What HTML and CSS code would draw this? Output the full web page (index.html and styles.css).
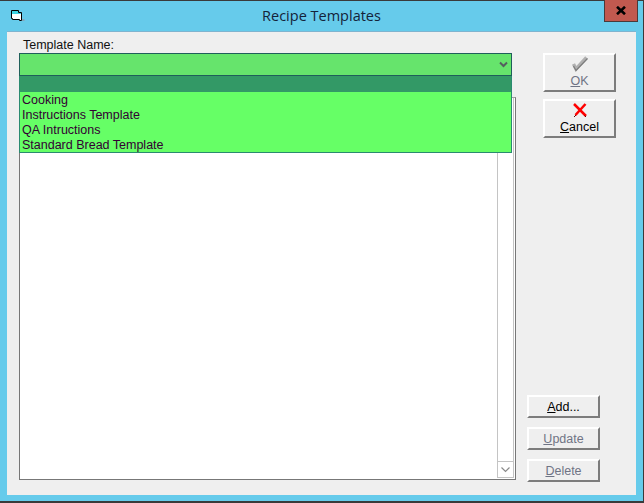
FILE: index.html
```html
<!DOCTYPE html>
<html lang="en">
<head>
<meta charset="utf-8">
<title>Recipe Templates</title>
<link rel="stylesheet" href="styles.css">
</head>
<body>
<div class="window">
  <header class="titlebar">
    <svg class="app-icon" width="14" height="12" viewBox="0 0 14 12">
      <path d="M0.5 0.5h7v2h3v8h-2v-1h-7v-1h-1z" fill="#fff" stroke="#000"/>
      <path d="M1 1h6v2h3v1H1z" fill="#3fd4e4"/>
      <path d="M11 10h2.500" stroke="#a08088" stroke-width="1"/>
    </svg>
    <h1 class="title">Recipe Templates</h1>
    <button class="close" type="button" aria-label="Close">
      <svg width="10" height="9" viewBox="0 0 10 9"><path d="M1 0.800 9 8.200M9 0.800 1 8.200" stroke="#000" stroke-width="2.600" fill="none"/></svg>
    </button>
  </header>
  <main class="client">
    <section class="editor">
      <label class="field-label">Template Name:</label>
      <div class="combo-wrap">
        <div class="combo">
          <svg class="chevron" width="9" height="7" viewBox="0 0 9 7"><path d="M1 1.500l3.500 3.500 3.500-3.500" fill="none" stroke="#555f5f" stroke-width="2"/></svg>
        </div>
        <div class="dropdown">
          <div class="dropdown-selected"></div>
          <ul class="dropdown-list">
            <li>Cooking</li>
            <li>Instructions Template</li>
            <li>QA Intructions</li>
            <li>Standard Bread Template</li>
          </ul>
        </div>
      </div>
      <div class="listbox">
        <div class="list-body"></div>
        <div class="scrollbar">
          <div class="scroll-track"></div>
          <div class="scroll-btn">
            <svg width="9" height="6" viewBox="0 0 9 6"><path d="M0.500 0.500l4 4 4-4" fill="none" stroke="#8a8a8a" stroke-width="1.200"/></svg>
          </div>
        </div>
      </div>
    </section>
    <aside class="actions">
      <div class="primary-actions">
        <button class="btn btn-tall is-disabled" type="button">
          <svg class="btn-icon" width="18" height="19" viewBox="0 0 18 19"><path d="M2.500 9 5 14 15.500 2.500" fill="none" stroke="#b0b0b0" stroke-width="3.400"/><path d="M2.500 11 5 15.500 16.500 3.500" fill="none" stroke="#7c7c7c" stroke-width="1.200"/></svg>
          <span><u>O</u>K</span>
        </button>
        <button class="btn btn-tall" type="button">
          <svg class="btn-icon" width="16" height="19" viewBox="0 0 16 19"><path d="M2 3l12 12M13.500 3 3.500 14" fill="none" stroke="#f00" stroke-width="2.500"/><path d="M2 16l2-2M14 16l-1.500-1.500" stroke="#600" stroke-width="1"/></svg>
          <span><u>C</u>ancel</span>
        </button>
      </div>
      <div class="secondary-actions">
        <button class="btn btn-small" type="button"><span><u>A</u>dd...</span></button>
        <button class="btn btn-small is-disabled" type="button"><span><u>U</u>pdate</span></button>
        <button class="btn btn-small is-disabled" type="button"><span><u>D</u>elete</span></button>
      </div>
    </aside>
  </main>
</div>
</body>
</html>
```

FILE: styles.css
```css
* { box-sizing: border-box; }
html, body { margin: 0; padding: 0; }
body {
  width: 644px;
  height: 503px;
  overflow: hidden;
  font-family: "Liberation Sans", Arial, sans-serif;
  font-size: 12.5px;
  color: #000;
}
.window {
  width: 644px;
  height: 503px;
  display: flex;
  flex-direction: column;
  background: #66cbeb;
  border-top: 1px solid #3a3a3a;
  border-right: 1px solid #3a3a3a;
  border-bottom: 2px solid #3a3a3a;
  padding: 0 7px 6px 7px;
}
.titlebar {
  position: relative;
  height: 30px;
  flex: none;
  display: flex;
  align-items: center;
  justify-content: center;
}
.app-icon { position: absolute; left: 4px; top: 9px; }
.title {
  margin: 0 0 2px;
  font-family: "Open Sans", "Noto Sans", sans-serif;
  font-size: 14.500px;
  font-weight: 400;
  color: #14233a;
}
.close {
  position: absolute;
  right: -2px;
  top: -1px;
  width: 34px;
  height: 22px;
  padding: 0;
  display: flex;
  align-items: center;
  justify-content: center;
  background: #c1594f;
  border: 1px solid #4a3a3a;
  border-top: 0;
}
.client {
  flex: 1;
  display: flex;
  background: #efefef;
  padding: 7px 20px 13px 12px;
  box-shadow: inset 0 1px 0 #7fb4cf;
}
.editor {
  width: 497px;
  display: flex;
  flex-direction: column;
}
.field-label {
  display: block;
  height: 15px;
  padding-left: 4px;
  line-height: 14px;
  color: #111;
}
.combo-wrap { position: relative; height: 44px; flex: none; }
.combo {
  width: 493px;
  height: 23px;
  background: #66e46c;
  border: 1px solid #1f5f5a;
  position: relative;
  display: flex;
  align-items: center;
  justify-content: flex-end;
  padding-right: 3px;
}
.dropdown {
  position: absolute;
  left: 0;
  top: 23px;
  width: 493px;
  z-index: 2;
  border: 1px solid #2a8a70;
  border-top: 0;
}
.dropdown-selected { height: 16px; background: #339966; }
.dropdown-list {
  list-style: none;
  margin: 0;
  padding: 0 2px;
  background: #66ff66;
  color: #330033;
}
.dropdown-list li { height: 15px; line-height: 17px; }
.listbox {
  flex: 1;
  display: flex;
  margin-bottom: 2px;
  background: #fff;
  border: 1px solid #777;
  border-top-color: #a0a0a0;
}
.list-body { flex: 1; }
.scrollbar {
  width: 17px;
  display: flex;
  flex-direction: column;
  margin: 0 1px 1px 0;
  background: #fff;
  border: 1px solid #c4c4c4;
  border-width: 0 1px 1px;
}
.scroll-track { flex: 1; }
.scroll-btn {
  height: 16px;
  display: flex;
  align-items: center;
  justify-content: center;
  border-top: 1px solid #c4c4c4;
}
.actions {
  flex: 1;
  display: flex;
  flex-direction: column;
  justify-content: space-between;
}
.primary-actions {
  display: flex;
  flex-direction: column;
  gap: 7px;
  margin: 15px 0 0 27px;
}
.secondary-actions {
  display: flex;
  flex-direction: column;
  gap: 9px;
  margin-left: 11px;
}
.btn {
  width: 73px;
  padding: 0;
  display: flex;
  flex-direction: column;
  align-items: center;
  justify-content: center;
  font: inherit;
  color: #000;
  background: #efefef;
  border: 2px solid;
  border-color: #fff #7c7c7c #7c7c7c #fff;
}
.btn-tall { height: 39px; justify-content: flex-start; }
.btn-tall span { line-height: 14px; }
.btn-icon { display: block; flex: none; }
.btn-small { height: 23px; }
.is-disabled { color: #6f7485; }
```
